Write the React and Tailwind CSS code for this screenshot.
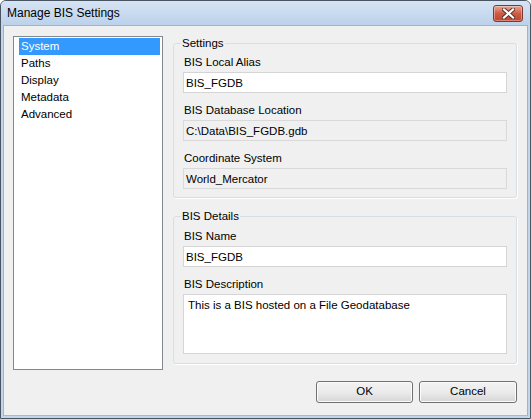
import React, { useState } from "react";

const font = { fontFamily: '"Liberation Sans", Arial, sans-serif' };

const pages = ["System", "Paths", "Display", "Metadata", "Advanced"];

function Field({ label, value, disabled }) {
  return (
    <div className="flex flex-col">
      <label className="h-[14px] leading-[14px] text-black pl-[1px]">{label}</label>
      <input
        readOnly
        value={value}
        className={
          "mt-[3px] h-[21px] w-full border px-[2px] outline-none text-black " +
          (disabled ? "bg-[#f0f0f0] border-[#d9d9d9]" : "bg-white border-[#d5d5d5]")
        }
      />
    </div>
  );
}

function Group({ title, children, className }) {
  return (
    <fieldset
      className={
        "border border-[#d5dfe5] rounded-[3px] px-[9px] shadow-[1px_1px_0_#ffffff] " + (className || "")
      }
    >
      <legend className="ml-[-2px] px-[1px] h-[14px] leading-[14px] text-black">{title}</legend>
      {children}
    </fieldset>
  );
}

export default function App() {
  const [selected, setSelected] = useState("System");

  return (
    <div
      className="w-[531px] h-[419px] flex flex-col bg-[#c1d5ec] border border-[#4a5563] rounded-t-[6px] overflow-hidden text-[11.5px]"
      style={font}
    >
      {/* title bar */}
      <div className="h-[24px] flex items-center justify-between bg-gradient-to-b from-[#d6e4f4] to-[#bcd2ea] pl-[6px] pr-[7px]">
        <span className="text-[12px] text-black">Manage BIS Settings</span>
        <button className="w-[30px] h-[17px] mt-[1px] flex items-center justify-center rounded-[3px] border border-[#7a3a33] bg-gradient-to-b from-[#e8a493] via-[#cf5b44] to-[#c2432d] shadow-[inset_0_0_0_1px_rgba(255,255,255,0.35)]">
          <svg width="13" height="11" viewBox="0 0 13 11">
            <path
              d="M2 1.5 L11 9.5 M11 1.5 L2 9.5"
              stroke="#5a2a24"
              strokeWidth="4"
              strokeLinecap="square"
            />
            <path
              d="M2 1.5 L11 9.5 M11 1.5 L2 9.5"
              stroke="#ffffff"
              strokeWidth="2.2"
              strokeLinecap="square"
            />
          </svg>
        </button>
      </div>

      {/* client area */}
      <div className="flex-1 mx-[2px] mb-[2px] bg-[#f0f0f0] border border-[#9fb4cc] border-b-[#7fc7ec] flex flex-col pt-[10px] pl-[9px] pr-[9px]">
        <div className="flex gap-[10px] items-start">
          <div className="w-[150px] h-[334px] bg-white border border-[#828790] pt-[1px] pl-[5px] pr-[2px]">
            {pages.map((p) => (
              <div
                key={p}
                onClick={() => setSelected(p)}
                className={
                  "h-[17px] leading-[17px] pl-[2px] cursor-default " +
                  (selected === p ? "bg-[#3399ff] text-white" : "text-black")
                }
              >
                {p}
              </div>
            ))}
          </div>

          <div className="w-[344px] flex flex-col">
            <Group title="Settings" className="pt-[5px] pb-[8px]">
              <div className="flex flex-col gap-[10px]">
                <Field label="BIS Local Alias" value="BIS_FGDB" />
                <Field label="BIS Database Location" value="C:\Data\BIS_FGDB.gdb" disabled />
                <Field label="Coordinate System" value="World_Mercator" disabled />
              </div>
            </Group>

            <Group title="BIS Details" className="mt-[11px] pt-[6px] pb-[9px]">
              <div className="flex flex-col gap-[10px]">
                <Field label="BIS Name" value="BIS_FGDB" />
                <div className="flex flex-col">
                  <label className="h-[14px] leading-[14px] text-black pl-[1px]">BIS Description</label>
                  <textarea
                    readOnly
                    value="This is a BIS hosted on a File Geodatabase"
                    className="mt-[3px] h-[60px] w-full resize-none border border-[#d5d5d5] bg-white px-[4px] py-[2px] outline-none text-black"
                  />
                </div>
              </div>
            </Group>
          </div>
        </div>

        <div className="mt-[11px] flex justify-end gap-[6px] pr-[1px]">
          <button className="w-[97px] h-[22px] rounded-[3px] border border-[#707070] bg-gradient-to-b from-[#f2f2f2] via-[#ebebeb] to-[#d6d6d6] text-black shadow-[inset_0_0_0_1px_#fcfcfc]">
            OK
          </button>
          <button className="w-[98px] h-[22px] rounded-[3px] border border-[#707070] bg-gradient-to-b from-[#f2f2f2] via-[#ebebeb] to-[#d6d6d6] text-black shadow-[inset_0_0_0_1px_#fcfcfc]">
            Cancel
          </button>
        </div>
      </div>
    </div>
  );
}
